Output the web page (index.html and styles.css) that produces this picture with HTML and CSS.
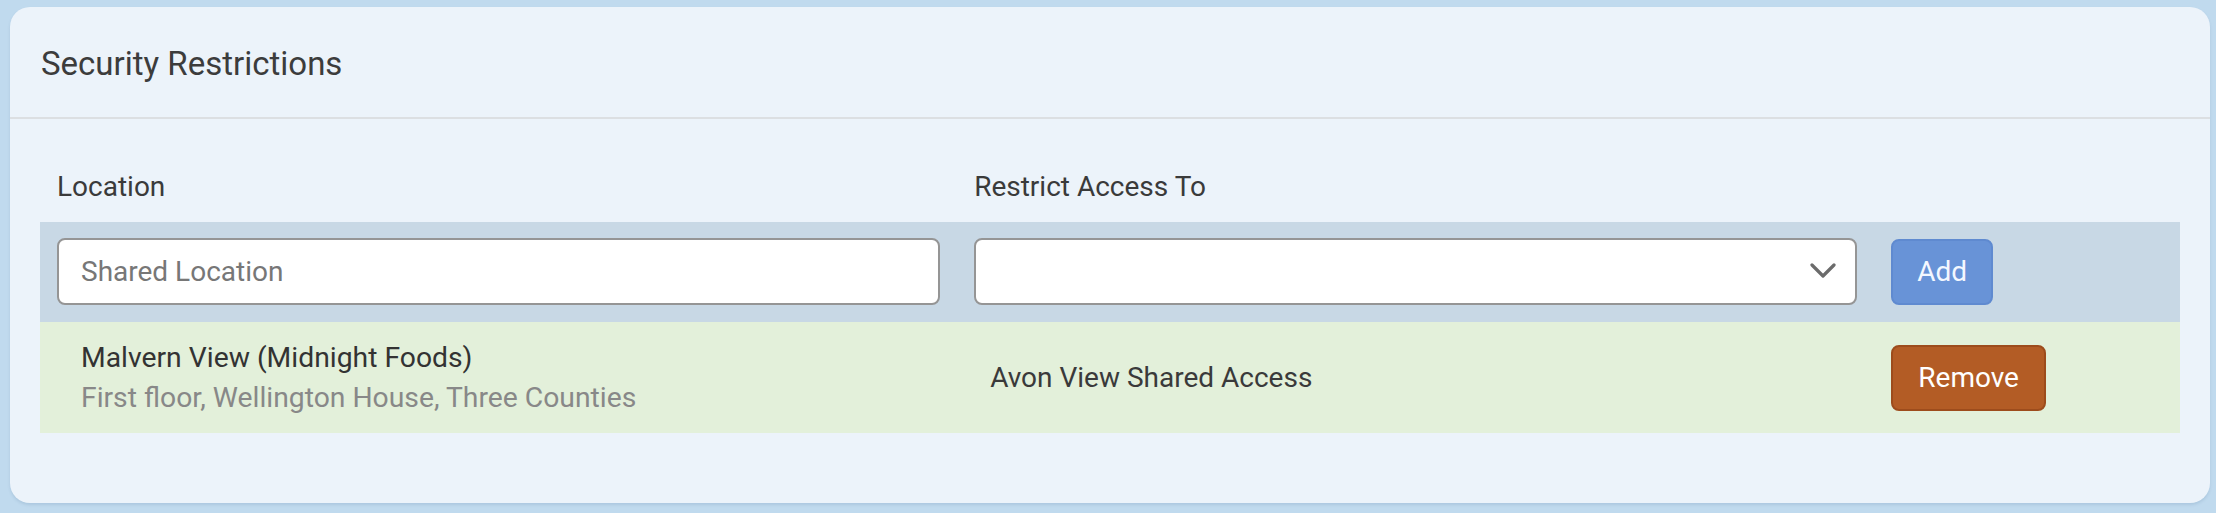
FILE: index.html
```html
<!DOCTYPE html>
<html lang="en">
<head>
<meta charset="utf-8">
<title>Security Restrictions</title>
<link rel="stylesheet" href="styles.css">
</head>
<body>
<div class="card">
  <div class="card-header">Security Restrictions</div>
  <div class="card-body">
    <div class="grid labels">
      <div class="cell">Location</div>
      <div class="cell">Restrict Access To</div>
      <div class="cell"></div>
    </div>
    <div class="grid add-row">
      <div class="cell"><input class="field" type="text" placeholder="Shared Location"></div>
      <div class="cell">
        <div class="field select">
          <svg class="chevron" width="26" height="17" viewBox="0 0 26 17"><polyline points="2,2 13,13 24,2" fill="none" stroke="#6b6b6b" stroke-width="3.2" stroke-linecap="round" stroke-linejoin="round"/></svg>
        </div>
      </div>
      <div class="cell"><button class="btn btn-add">Add</button></div>
    </div>
    <div class="grid item-row">
      <div class="cell loc">
        <div class="name">Malvern View (Midnight Foods)</div>
        <div class="addr">First floor, Wellington House, Three Counties</div>
      </div>
      <div class="cell access">Avon View Shared Access</div>
      <div class="cell"><button class="btn btn-remove">Remove</button></div>
    </div>
  </div>
</div>
</body>
</html>
```
FILE: styles.css
```css
* { box-sizing: border-box; }
html, body { margin: 0; padding: 0; }
body {
  background: #c0daee;
  font-family: Roboto, "Liberation Sans", sans-serif;
  color: #3a3a3a;
  padding: 7px 6px 10px 10px;
  height: 513px;
}
.card {
  background: #ecf3fa;
  border-radius: 20px;
  height: 496px;
  box-shadow: 0 2px 3px rgba(60, 100, 140, 0.15);
}
.card-header {
  font-size: 33px;
  line-height: 32px;
  padding: 41px 31px 37px;
  border-bottom: 2px solid #dcdfe2;
  color: #3c3c3c;
}
.card-body {
  padding: 54px 30px 0;
}
.grid {
  display: grid;
  grid-template-columns: 3fr 3fr 1fr;
  align-items: center;
}
.cell {
  padding: 0 17px;
  min-width: 0;
}
.labels {
  font-size: 28px;
  line-height: 28px;
  padding-bottom: 21px;
  color: #3a3a3a;
}
.add-row {
  background: #c8d8e5;
  padding: 16px 0 17px;
}
.field {
  display: block;
  width: 100%;
  height: 67px;
  background: #fff;
  border: 2px solid #959595;
  border-radius: 8px;
  font-family: Roboto, "Liberation Sans", sans-serif;
  font-size: 28px;
  padding: 0 0 0 22px;
  color: #3a3a3a;
  outline: none;
}
.field::placeholder { color: #777; opacity: 1; }
.select {
  display: flex;
  align-items: center;
  justify-content: flex-end;
  padding-right: 19px;
}
.chevron { display: block; }
.btn {
  font-family: Roboto, "Liberation Sans", sans-serif;
  font-size: 28px;
  height: 66px;
  border-radius: 8px;
  color: #fff;
  cursor: pointer;
  line-height: 1;
}
.btn-add {
  background: #6893d7;
  border: 2px solid #5f8ad0;
  color: #f4f8ff;
  padding: 0 24px;
}
.btn-remove {
  background: #b35c25;
  border: 2px solid #9d4c1c;
  padding: 0 25px;
}
.item-row {
  background: #e3f0da;
  height: 111px;
}
.loc {
  padding-left: 41px;
  font-size: 28.3px;
  line-height: 40px;
  white-space: nowrap;
}
.name { color: #333; }
.addr { color: #888; }
.access {
  font-size: 28px;
  line-height: 40px;
  padding-left: 33px;
  color: #3a3a3a;
}
```
